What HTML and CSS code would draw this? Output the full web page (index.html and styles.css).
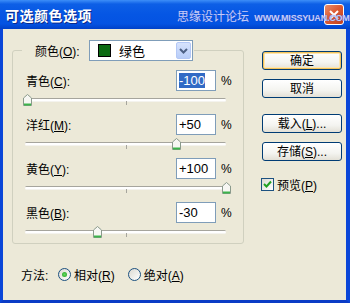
FILE: index.html
```html
<!DOCTYPE html>
<html lang="zh">

<head>
    <meta charset="UTF-8">
    <meta name="viewport" content="width=device-width, initial-scale=1.0">
    <title>可选颜色选项</title>
    <link rel="stylesheet" href="styles.css">
</head>

<body>

    <div class="window">
        <div class="titlebar">
            <span class="title">可选颜色选项</span>
            <span class="watermark">思缘设计论坛 <b>WWW.MISSYUAN.COM</b></span>
            <span class="close">
                <svg width="10" height="10" viewBox="0 0 10 10"><path d="M1 1 L9 9 M9 1 L1 9" stroke="#fff" stroke-width="2" /></svg>
            </span>
        </div>

        <div class="frame">
            <div class="left">
                <fieldset class="group">
                    <legend class="group-head">
                        <span class="head-label">颜色(<u>O</u>):</span>
                        <span class="select">
                            <span class="swatch"></span>
                            <span class="select-text">绿色</span>
                            <span class="arrow">
                                <svg width="9" height="6" viewBox="0 0 9 6"><path d="M1 1 L4.5 4.5 L8 1" fill="none" stroke="#4d6185" stroke-width="2" /></svg>
                            </span>
                        </span>
                    </legend>

                    <div class="row">
                        <div class="row-top">
                            <span class="label">青色(<u>C</u>):</span>
                            <span class="field"><span class="selected">-100</span></span>
                            <span class="pct">%</span>
                        </div>
                        <div class="slider">
                            <span class="track"></span><span class="tick"></span>
                            <span class="thumb" style="left: 0px"><svg width="9" height="12" viewBox="0 0 9 12"><path d="M0.5 4 L4.5 0.5 L8.5 4 V11.5 H0.5 Z" fill="#f7f7f3" stroke="#8a9a8c" /><path d="M1 10.5 H8" stroke="#3cb44a" stroke-width="2" /></svg></span>
                        </div>
                    </div>

                    <div class="row">
                        <div class="row-top">
                            <span class="label">洋红(<u>M</u>):</span>
                            <span class="field">+50</span>
                            <span class="pct">%</span>
                        </div>
                        <div class="slider">
                            <span class="track"></span><span class="tick"></span>
                            <span class="thumb" style="left: 149px"><svg width="9" height="12" viewBox="0 0 9 12"><path d="M0.5 4 L4.5 0.5 L8.5 4 V11.5 H0.5 Z" fill="#f7f7f3" stroke="#8a9a8c" /><path d="M1 10.5 H8" stroke="#3cb44a" stroke-width="2" /></svg></span>
                        </div>
                    </div>

                    <div class="row">
                        <div class="row-top">
                            <span class="label">黄色(<u>Y</u>):</span>
                            <span class="field">+100</span>
                            <span class="pct">%</span>
                        </div>
                        <div class="slider">
                            <span class="track"></span><span class="tick"></span>
                            <span class="thumb" style="left: 199px"><svg width="9" height="12" viewBox="0 0 9 12"><path d="M0.5 4 L4.5 0.5 L8.5 4 V11.5 H0.5 Z" fill="#f7f7f3" stroke="#8a9a8c" /><path d="M1 10.5 H8" stroke="#3cb44a" stroke-width="2" /></svg></span>
                        </div>
                    </div>

                    <div class="row">
                        <div class="row-top">
                            <span class="label">黑色(<u>B</u>):</span>
                            <span class="field">-30</span>
                            <span class="pct">%</span>
                        </div>
                        <div class="slider">
                            <span class="track"></span><span class="tick"></span>
                            <span class="thumb" style="left: 70px"><svg width="9" height="12" viewBox="0 0 9 12"><path d="M0.5 4 L4.5 0.5 L8.5 4 V11.5 H0.5 Z" fill="#f7f7f3" stroke="#8a9a8c" /><path d="M1 10.5 H8" stroke="#3cb44a" stroke-width="2" /></svg></span>
                        </div>
                    </div>
                </fieldset>

                <div class="method">
                    <span class="method-label">方法:</span>
                    <span class="radio checked"></span>
                    <span class="radio-text">相对(<u>R</u>)</span>
                    <span class="radio"></span>
                    <span class="radio-text">绝对(<u>A</u>)</span>
                </div>
            </div>

            <div class="right">
                <button class="button default">确定</button>
                <button class="button">取消</button>
                <button class="button gap">载入(<u>L</u>)...</button>
                <button class="button">存储(<u>S</u>)...</button>
                <div class="preview">
                    <span class="checkbox">
                        <svg width="9" height="9" viewBox="0 0 9 9"><path d="M1 4 L3.5 6.5 L8 1.5" fill="none" stroke="#21a121" stroke-width="2" /></svg>
                    </span>
                    <span>预览(<u>P</u>)</span>
                </div>
            </div>
        </div>
    </div>

</body>

</html>
```

FILE: styles.css
```css
body {
    margin: 0;
    padding: 0;
    font-family: "Liberation Sans", "Noto Sans CJK SC", sans-serif;
    font-size: 12px;
    color: #000;
    background-color: #fff;
}

.window {
    width: 350px;
    height: 303px;
    display: flex;
    flex-direction: column;
}

/* barra de titulo */
.titlebar {
    position: relative;
    height: 29px;
    flex-shrink: 0;
    display: flex;
    align-items: center;
    padding-left: 5px;
    background: linear-gradient(#3d8ef8 0%, #0d5fe6 14%, #0556e4 50%, #0453e2 82%, #0041c8 100%);
}

.title {
    flex: 1;
    color: #fff;
    font-size: 14px;
    font-weight: bold;
    letter-spacing: 0.5px;
    text-shadow: 1px 1px #0b2a8a;
}

.watermark {
    position: absolute;
    z-index: 1;
    left: 177px;
    top: 7px;
    color: #c4cdfb;
    font-size: 12px;
    white-space: nowrap;
    text-shadow: 0 0 1px #3a4fc0;
}

.watermark b {
    font-size: 9px;
    letter-spacing: -0.2px;
    margin-left: 2px;
}

.close {
    width: 18px;
    height: 19px;
    margin-right: 6px;
    display: flex;
    align-items: center;
    justify-content: center;
    border: 1px solid #fff;
    border-radius: 3px;
    background: linear-gradient(135deg, #e98e6c 0%, #dd5b34 45%, #c4401b 100%);
}

/* corpo */
.frame {
    flex: 1;
    display: flex;
    background-color: #ece9d8;
    border-left: 3px solid #0a46d8;
    border-right: 4px solid #0a46d8;
    border-bottom: 3px solid #0a3cc6;
}

.left {
    padding-left: 9px;
}

.group {
    box-sizing: border-box;
    width: 228px;
    margin: 11px 0 0;
    padding: 9px 12px 0 13px;
    border: 1px solid #d0d0bf;
    border-radius: 3px;
}

.group-head {
    display: flex;
    align-items: center;
    height: 21px;
    margin-left: -4px;
    padding: 0 1px 0 13px;
}

.head-label {
    width: 54px;
}

.select {
    box-sizing: border-box;
    width: 104px;
    height: 21px;
    display: flex;
    align-items: center;
    border: 1px solid #7f9db9;
    background-color: #fff;
    padding: 0 1px 0 8px;
}

.swatch {
    box-sizing: border-box;
    width: 13px;
    height: 13px;
    border: 1px solid #000;
    background-color: #0b6a12;
}

.select-text {
    flex: 1;
    margin-left: 8px;
    font-size: 13px;
}

.arrow {
    box-sizing: border-box;
    width: 15px;
    height: 17px;
    display: flex;
    align-items: center;
    justify-content: center;
    border: 1px solid #b4c8f6;
    border-radius: 2px;
    background: linear-gradient(#d7e3fd, #b8cdf8);
}

.row {
    height: 41px;
    margin-bottom: 3px;
}

.row:last-child {
    margin-bottom: 0;
}

.row-top {
    display: flex;
    align-items: center;
    height: 21px;
}

.label {
    flex: 1;
}

.field {
    box-sizing: border-box;
    width: 40px;
    height: 21px;
    padding-left: 2px;
    border: 1px solid #7f9db9;
    background-color: #fff;
    font-size: 13px;
    line-height: 19px;
}

.selected {
    background-color: #316ac5;
    color: #fff;
}

.pct {
    width: 10px;
    margin-left: 5px;
    font-size: 12px;
}

.slider {
    position: relative;
    width: 208px;
    height: 20px;
    margin-left: -3px;
}

.track {
    position: absolute;
    left: 2px;
    right: 5px;
    top: 7px;
    height: 2px;
    border-top: 1px solid #a6a59d;
    border-radius: 2px;
    background-color: #fff;
    box-shadow: 0 1px 0 #f4f3ee;
}

.tick {
    position: absolute;
    left: 103px;
    top: 10px;
    width: 1px;
    height: 4px;
    background-color: #a6a59d;
}

.thumb {
    position: absolute;
    top: 3px;
    width: 9px;
    height: 12px;
    display: flex;
}

/* metodo */
.method {
    display: flex;
    align-items: center;
    height: 21px;
    margin-top: 20px;
    padding-left: 9px;
}

.method-label {
    width: 37px;
}

.radio {
    box-sizing: border-box;
    width: 13px;
    height: 13px;
    border: 1px solid #1c5180;
    border-radius: 50%;
    background: linear-gradient(135deg, #dcdad2, #fff);
    position: relative;
}

.radio.checked::after {
    content: "";
    position: absolute;
    left: 3px;
    top: 3px;
    width: 5px;
    height: 5px;
    border-radius: 50%;
    background: radial-gradient(#63d860, #21a121);
}

.radio-text {
    margin-left: 3px;
    margin-right: 13px;
}

/* botoes */
.right {
    display: flex;
    flex-direction: column;
    padding-top: 22px;
    margin-left: 18px;
}

.button {
    box-sizing: border-box;
    width: 80px;
    height: 19px;
    margin: 0 0 9px;
    padding: 0;
    border: 1px solid #003c74;
    border-radius: 3px;
    background: linear-gradient(#ffffff 0%, #f4f4f0 60%, #e3e0d6 100%);
    font-family: inherit;
    font-size: 12px;
    color: #000;
    line-height: 16px;
}

.button.default {
    box-shadow: inset 0 0 0 1px #f3c25a, inset 0 0 0 2px #fde6b0;
}

.button.gap {
    margin-top: 7px;
}

.preview {
    display: flex;
    align-items: center;
    margin-top: 6px;
    margin-left: -1px;
}

.checkbox {
    box-sizing: border-box;
    width: 13px;
    height: 13px;
    display: flex;
    align-items: center;
    justify-content: center;
    border: 1px solid #1c5180;
    background: linear-gradient(135deg, #dcdad2, #fff);
    margin-right: 3px;
}
```
